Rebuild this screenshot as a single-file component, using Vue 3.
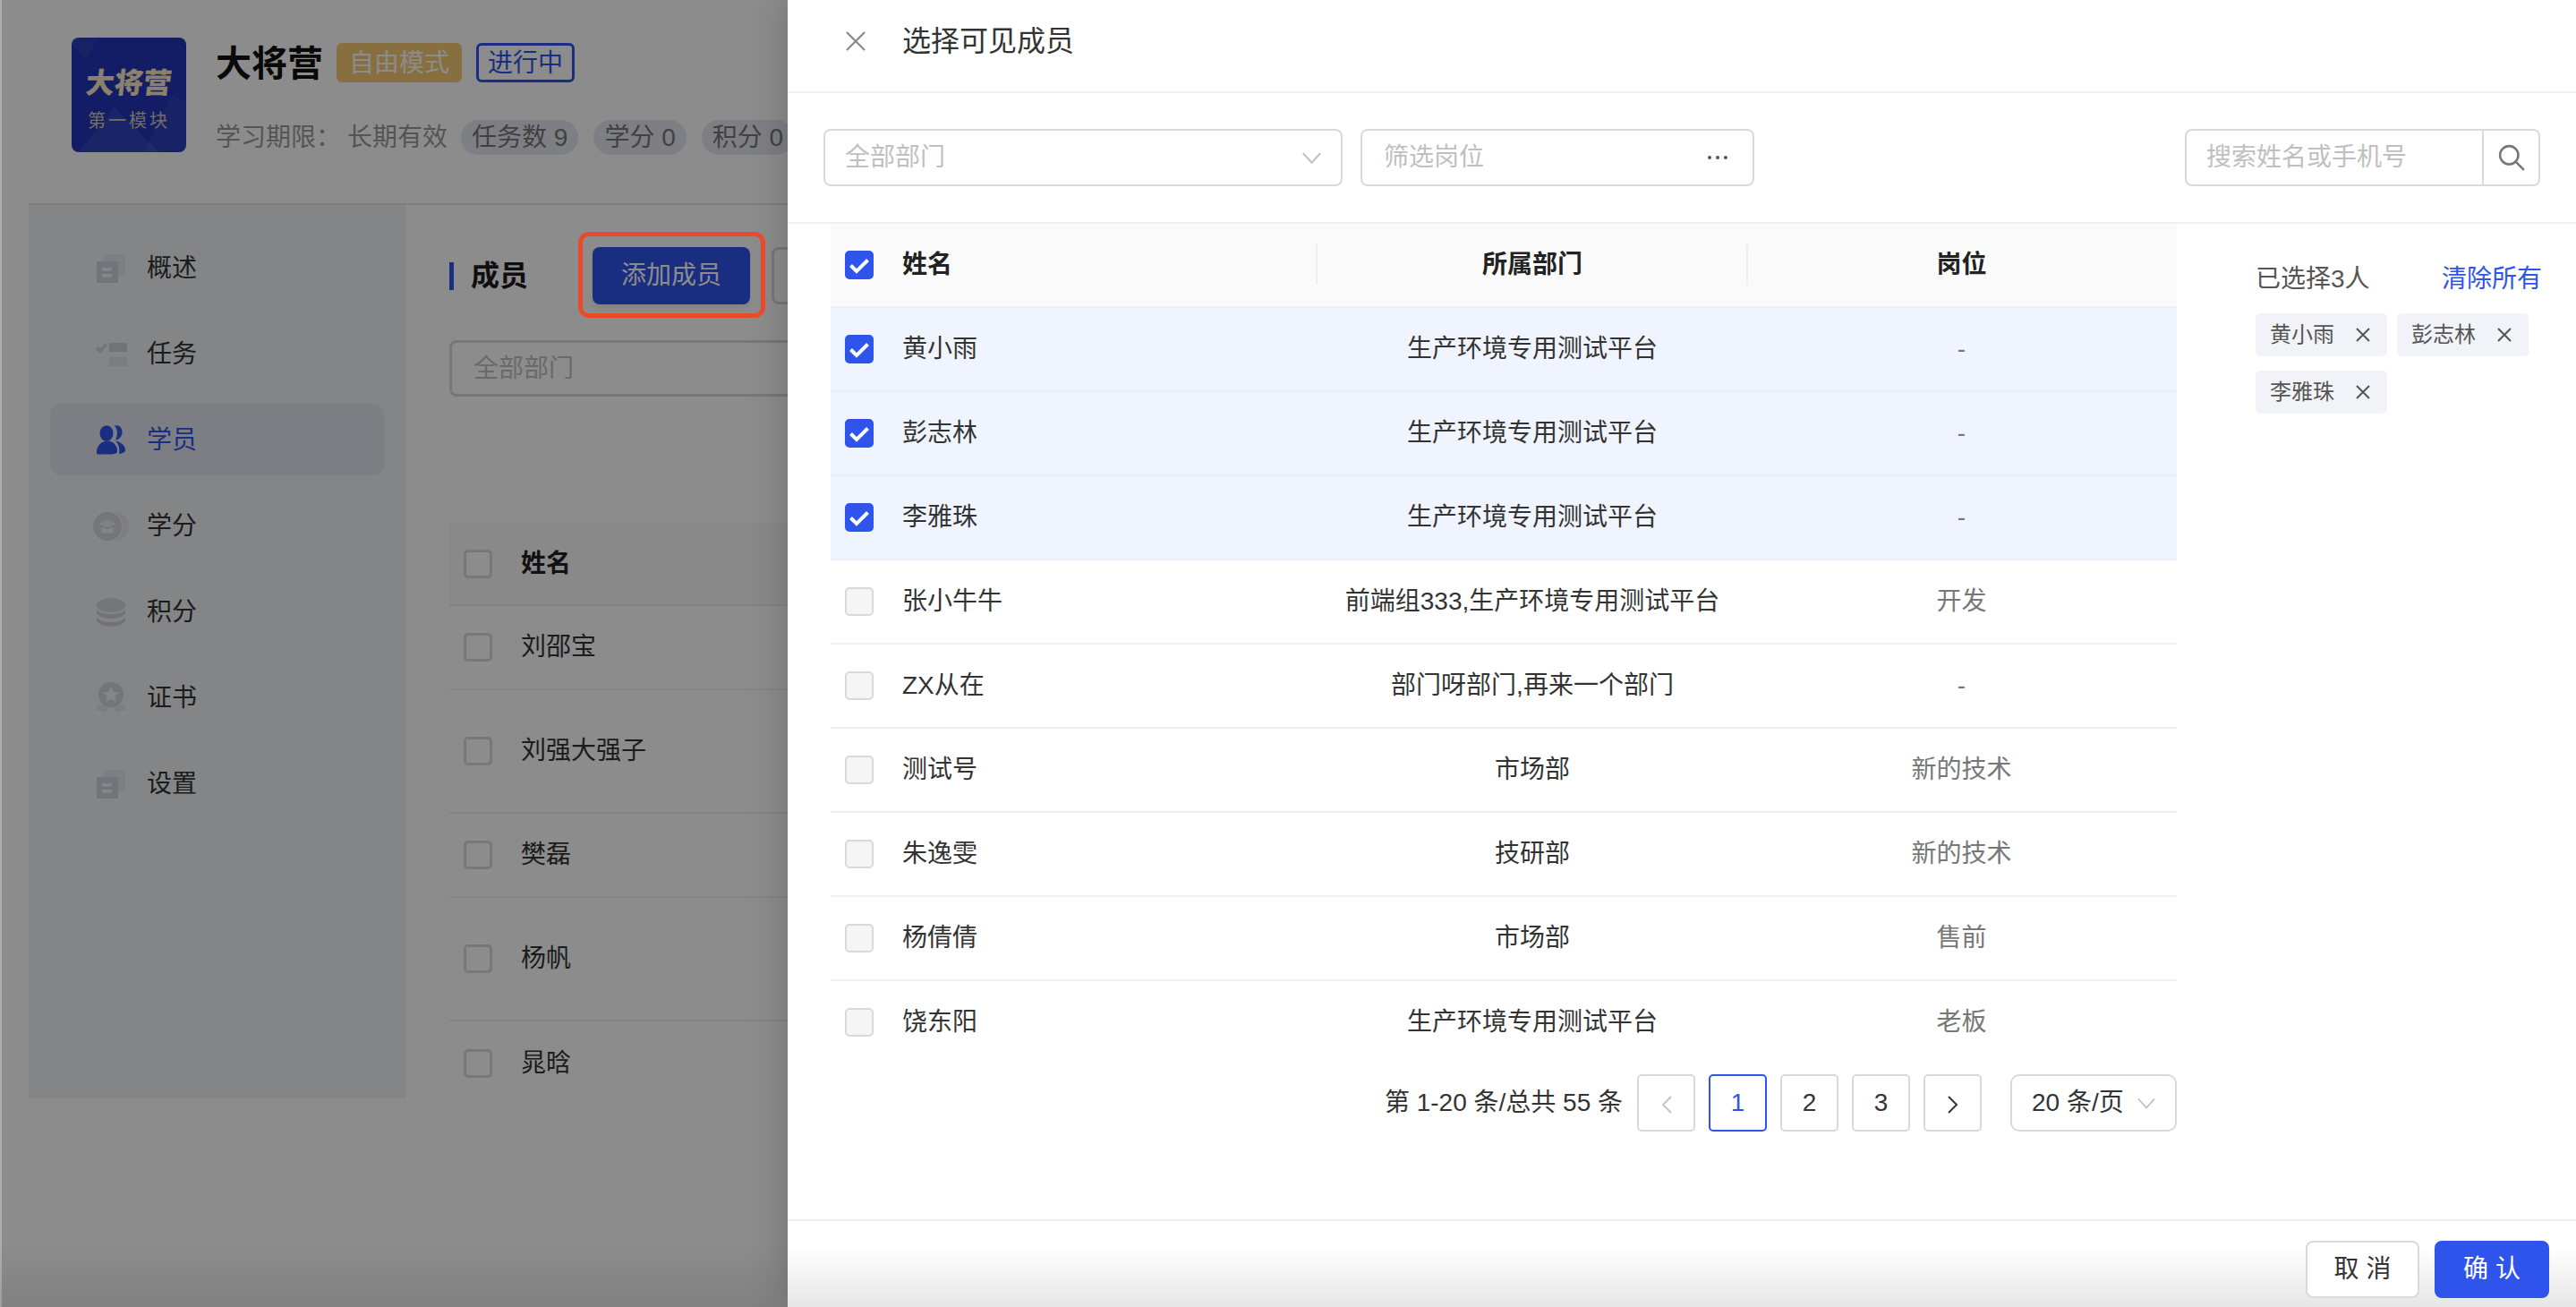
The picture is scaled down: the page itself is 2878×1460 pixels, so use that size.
<script setup>
const navItems = [
  { key: 'doc', label: '概述' },
  { key: 'task', label: '任务' },
  { key: 'user', label: '学员', active: true },
  { key: 'credit', label: '学分' },
  { key: 'coin', label: '积分' },
  { key: 'cert', label: '证书' },
  { key: 'doc', label: '设置' },
]

const learners = [
  { name: '刘邵宝' },
  { name: '刘强大强子', tall: true },
  { name: '樊磊' },
  { name: '杨帆', tall: true },
  { name: '晁晗' },
]

const members = [
  { name: '黄小雨', dept: '生产环境专用测试平台', job: '-', checked: true },
  { name: '彭志林', dept: '生产环境专用测试平台', job: '-', checked: true },
  { name: '李雅珠', dept: '生产环境专用测试平台', job: '-', checked: true },
  { name: '张小牛牛', dept: '前端组333,生产环境专用测试平台', job: '开发' },
  { name: 'ZX从在', dept: '部门呀部门,再来一个部门', job: '-' },
  { name: '测试号', dept: '市场部', job: '新的技术' },
  { name: '朱逸雯', dept: '技研部', job: '新的技术' },
  { name: '杨倩倩', dept: '市场部', job: '售前' },
  { name: '饶东阳', dept: '生产环境专用测试平台', job: '老板' },
]

const selected = members.filter((m) => m.checked)
</script>

<template>
  <div class="page">
    <div class="bg">
      <header class="course">
        <div class="logo">
          <svg class="logo-art" viewBox="0 0 128 128">
            <path d="M0 8 L16 24 L30 0 L0 0 Z" fill="#fff" opacity=".05" />
            <path d="M8 128 L48 78 L98 128 Z" fill="#fff" opacity=".07" />
            <path d="M80 128 L112 64 L128 72 L128 128 Z" fill="#fff" opacity=".05" />
          </svg>
          <span class="logo-main">大将营</span>
          <span class="logo-sub">第一模块</span>
        </div>
        <div class="meta">
          <div class="meta-top">
            <h1>大将营</h1>
            <span class="tag tag-gold">自由模式</span>
            <span class="tag tag-line">进行中</span>
          </div>
          <div class="meta-bottom">
            <span class="period-label">学习期限：</span>
            <span class="period-value">长期有效</span>
            <span class="chip">任务数 9</span>
            <span class="chip">学分 0</span>
            <span class="chip">积分 0</span>
          </div>
        </div>
      </header>

      <div class="body">
        <aside class="side">
          <div v-for="item in navItems" :key="item.label" class="nav" :class="{ active: item.active }">
            <svg class="nav-icon" viewBox="0 0 40 40">
              <template v-if="item.key === 'doc'">
                <rect x="12" y="5" width="24" height="24" fill="#e6e8f3" />
                <rect x="4" y="13" width="24" height="24" fill="#d3d5e0" />
                <rect x="10" y="20" width="11" height="3.5" fill="#f5f6fa" />
                <rect x="10" y="27" width="11" height="3.5" fill="#f5f6fa" />
              </template>
              <template v-else-if="item.key === 'task'">
                <path d="M4 13.5 L8 17 L15 9.5" fill="none" stroke="#d3d4da" stroke-width="4" />
                <rect x="18" y="8" width="20" height="10" fill="#d0d1d6" />
                <rect x="18" y="24" width="20" height="10" fill="#e2e3e9" />
              </template>
              <template v-else-if="item.key === 'user'">
                <path d="M24 4.5 C30 3 33 8 32.5 12.5 C32 17 29 20 25 20.5 C27.5 16 28 9 24 4.5 Z" fill="#2f54eb" />
                <ellipse cx="15" cy="13" rx="7.5" ry="8.8" fill="#2f54eb" />
                <path d="M4 36 C3 28 9 21.5 16 21.5 C23 21.5 28 28 27 34 C26 36 22 36.5 16 36.5 C10 36.5 5 37 4 36 Z" fill="#2f54eb" />
                <path d="M25 21.5 C31 22.5 36 27 36 31.5 C36 34 33 35.5 29 36 C30 31 29 25.5 25 21.5 Z" fill="#2f54eb" />
              </template>
              <template v-else-if="item.key === 'credit'">
                <circle cx="24" cy="21" r="16" fill="#e7e8ed" />
                <circle cx="16" cy="21" r="17" fill="#f1f2f5" />
                <circle cx="16" cy="21" r="16" fill="#d6d7dc" />
                <path d="M16 13.5 L26 18 L16 22.5 L6 18 Z" fill="#eceef2" />
                <path d="M9 21.5 L16 24.5 L23 21.5 L23 27 C20 29.5 12 29.5 9 27 Z" fill="#eceef2" />
              </template>
              <template v-else-if="item.key === 'coin'">
                <ellipse cx="20" cy="13" rx="16" ry="8" fill="#d6d7dc" />
                <path d="M4 17 C7 25 33 25 36 17 L36 22 C33 30 7 30 4 22 Z" fill="#d0d1d6" />
                <path d="M4 26 C7 34 33 34 36 26 L36 30 C33 39 7 39 4 30 Z" fill="#cfd0d5" />
              </template>
              <template v-else>
                <path d="M6 27 L3 35 L10 34 L13 38 L18 31 Z" fill="#e4e5ea" />
                <path d="M34 27 L37 35 L30 34 L27 38 L22 31 Z" fill="#e4e5ea" />
                <circle cx="20" cy="17" r="14" fill="#d4d6de" />
                <path d="M20 8 L22.8 13.8 L29 14.5 L24.5 18.8 L25.7 25 L20 22 L14.3 25 L15.5 18.8 L11 14.5 L17.2 13.8 Z" fill="#f2f3f7" />
              </template>
            </svg>
            <span class="nav-label">{{ item.label }}</span>
          </div>
        </aside>

        <main class="main">
          <div class="main-head">
            <span class="main-bar"></span>
            <span class="main-title">成员</span>
            <div class="add-wrap">
              <button class="add-btn">添加成员</button>
              <span class="highlight"></span>
            </div>
            <span class="ghost-btn"></span>
          </div>
          <div class="dept-filter">全部部门</div>
          <div class="learners">
            <div class="learner-row learner-head">
              <span class="box"></span>
              <span>姓名</span>
            </div>
            <div v-for="row in learners" :key="row.name" class="learner-row" :class="{ tall: row.tall }">
              <span class="box"></span>
              <span>{{ row.name }}</span>
            </div>
          </div>
        </main>
      </div>
      <div class="bottom-fade"></div>
    </div>

    <div class="mask"></div>

    <section class="drawer">
      <div class="drawer-head">
        <svg class="close" viewBox="0 0 24 24">
          <path d="M2 2 L22 22 M22 2 L2 22" fill="none" stroke="#8c8c8c" stroke-width="2.4" />
        </svg>
        <span>选择可见成员</span>
      </div>

      <div class="filters">
        <div class="field field-dept">
          <span class="holder">全部部门</span>
          <svg class="arrow" viewBox="0 0 22 13">
            <path d="M1 1 L11 12 L21 1" fill="none" stroke="#bfbfbf" stroke-width="2" />
          </svg>
        </div>
        <div class="field field-job">
          <span class="holder">筛选岗位</span>
          <span class="dots"><i></i><i></i><i></i></span>
        </div>
        <div class="search">
          <span class="holder">搜索姓名或手机号</span>
          <span class="search-btn">
            <svg viewBox="0 0 28 28" width="30" height="30">
              <circle cx="11.5" cy="11.5" r="9.5" fill="none" stroke="#777" stroke-width="2.4" />
              <path d="M18.5 18.5 L27 27" stroke="#777" stroke-width="2.4" />
            </svg>
          </span>
        </div>
      </div>

      <div class="content">
        <div class="list">
          <div class="table">
            <div class="tr th">
              <div class="td td-name">
                <span class="check on">
                  <svg viewBox="0 0 32 32"><path d="M6.5 16.5 L13 23 L25.5 10.5" fill="none" stroke="#fff" stroke-width="4" /></svg>
                </span>
                <span>姓名</span>
              </div>
              <div class="td td-center td-dept col-split">所属部门</div>
              <div class="td td-center col-split">岗位</div>
            </div>
            <div v-for="m in members" :key="m.name" class="tr" :class="{ picked: m.checked }">
              <div class="td td-name">
                <span class="check" :class="{ on: m.checked }">
                  <svg v-if="m.checked" viewBox="0 0 32 32"><path d="M6.5 16.5 L13 23 L25.5 10.5" fill="none" stroke="#fff" stroke-width="4" /></svg>
                </span>
                <span>{{ m.name }}</span>
              </div>
              <div class="td td-center td-dept">{{ m.dept }}</div>
              <div class="td td-center td-job">{{ m.job }}</div>
            </div>
          </div>

          <div class="pager">
            <span class="total">第 1-20 条/总共 55 条</span>
            <div class="pg-group">
              <span class="pg">
                <svg class="chev" viewBox="0 0 14 20" width="14" height="20"><path d="M12 1 L3 10 L12 19" fill="none" stroke="#c4c4c4" stroke-width="2" /></svg>
              </span>
              <span class="pg current">1</span>
              <span class="pg">2</span>
              <span class="pg">3</span>
              <span class="pg">
                <svg class="chev" viewBox="0 0 14 20" width="14" height="20"><path d="M2 1 L11 10 L2 19" fill="none" stroke="#333" stroke-width="2" /></svg>
              </span>
            </div>
            <div class="page-size">
              <span>20 条/页</span>
              <svg viewBox="0 0 22 13" width="20" height="13"><path d="M1 1 L11 12 L21 1" fill="none" stroke="#bfbfbf" stroke-width="2" /></svg>
            </div>
          </div>
        </div>

        <aside class="picked-panel">
          <div class="picked-head">
            <span>已选择3人</span>
            <a class="clear">清除所有</a>
          </div>
          <div class="picked-tags">
            <span v-for="m in selected" :key="m.name" class="picked-tag">
              {{ m.name }}
              <svg viewBox="0 0 16 16" width="16" height="16"><path d="M1 1 L15 15 M15 1 L1 15" fill="none" stroke="#555" stroke-width="2" /></svg>
            </span>
          </div>
        </aside>
      </div>

      <footer class="drawer-foot">
        <button class="btn">取 消</button>
        <button class="btn btn-primary">确 认</button>
      </footer>
    </section>
  </div>
</template>

<style>
html, body {
  margin: 0;
  overflow: hidden;
  background: #fff;
}
</style>

<style scoped>
* {
  box-sizing: border-box;
}
.page {
  position: relative;
  width: 2878px;
  height: 1460px;
  overflow: hidden;
  font-family: "Liberation Sans", "Noto Sans CJK SC", sans-serif;
  font-size: 28px;
  line-height: 1.4;
  color: #333;
  background: #fff;
}
.bg {
  height: 100%;
  padding: 42px 0 0 32px;
}

/* course header */
.course {
  display: flex;
  height: 185px;
  padding-left: 48px;
  gap: 33px;
}
.logo {
  position: relative;
  width: 128px;
  height: 128px;
  border-radius: 8px;
  background: #2136b8;
  overflow: hidden;
  display: flex;
  flex-direction: column;
  align-items: center;
  color: #fbe9c6;
}
.logo-art {
  position: absolute;
  inset: 0;
}
.logo-main {
  margin-top: 29px;
  font-size: 32px;
  line-height: 44px;
  font-weight: 900;
  transform: skewX(-6deg);
}
.logo-sub {
  margin-top: 8px;
  font-size: 20px;
  line-height: 24px;
  letter-spacing: 3px;
  opacity: .8;
}
.meta-top {
  display: flex;
  align-items: center;
  height: 44px;
  margin-top: 6px;
}
.meta-top h1 {
  margin: 2px 15px 0 0;
  font-size: 40px;
  font-weight: 600;
  color: #111;
}
.tag {
  height: 44px;
  padding: 2px 14px 0;
  border-radius: 6px;
  display: flex;
  align-items: center;
}
.tag-gold {
  background: #f8cb74;
  color: #fff;
}
.tag-line {
  margin-left: 16px;
  border: 3px solid #2f54eb;
  color: #2f54eb;
  padding: 2px 10px 0;
  background: #fff;
}
.meta-bottom {
  display: flex;
  align-items: center;
  height: 39px;
  margin-top: 42px;
  color: #9a9a9a;
}
.period-value {
  margin-left: 7px;
  margin-right: 15px;
}
.chip {
  height: 39px;
  line-height: 39px;
  padding: 0 12px;
  margin-right: 17px;
  border-radius: 20px;
  background: #e5e7f0;
  color: #777;
  white-space: nowrap;
}

/* left menu and main content */
.body {
  display: flex;
  border-top: 2px solid #e4e4e4;
}
.side {
  flex: none;
  width: 422px;
  height: 998px;
  padding: 30px 25px 0 24px;
  background: #f1f2f5;
  display: flex;
  flex-direction: column;
  gap: 16px;
}
.nav {
  height: 80px;
  padding-left: 48px;
  border-radius: 12px;
  display: flex;
  align-items: center;
  gap: 20px;
}
.nav-label {
  margin-top: 2px;
}
.nav.active {
  background: #e3e6f1;
  color: #2f54eb;
}
.nav-icon {
  width: 40px;
  height: 40px;
  flex: none;
}
.main {
  flex: 1;
  padding-left: 48px;
}
.main-head {
  display: flex;
  align-items: center;
  height: 64px;
  margin-top: 47px;
}
.main-bar {
  width: 5px;
  height: 31px;
  background: #2f54eb;
}
.main-title {
  margin-left: 19px;
  font-size: 32px;
  font-weight: 700;
  color: #1c1c1c;
}
.add-wrap {
  position: relative;
  margin-left: 72px;
}
.add-btn {
  display: block;
  width: 176px;
  height: 64px;
  border: 0;
  border-radius: 8px;
  background: #2f54eb;
  color: #fff;
  font: inherit;
  box-shadow: 0 4px 6px rgba(0, 0, 0, .08);
}
/* annotation drawn on the screenshot, stays bright above the dim layer */
.highlight {
  position: absolute;
  z-index: 5;
  inset: -17px -17px -15px -16px;
  border: 5px solid #ea4a2b;
  border-radius: 12px;
}
.ghost-btn {
  width: 200px;
  height: 64px;
  margin-left: 24px;
  border: 3px solid #d9d9d9;
  border-radius: 8px;
  background: #fff;
}
.dept-filter {
  width: 500px;
  height: 63px;
  margin-top: 40px;
  padding-left: 24px;
  border: 3px solid #d9d9d9;
  border-radius: 8px;
  display: flex;
  align-items: center;
  color: #bfbfbf;
}
.learners {
  margin-top: 141px;
  width: 500px;
}
.learner-row {
  height: 94px;
  padding-left: 16px;
  border-bottom: 2px solid #efefef;
  display: flex;
  align-items: center;
  gap: 32px;
}
.learner-row.tall {
  height: 138px;
}
.learner-row:last-child {
  border-bottom: 0;
}
.learner-head {
  height: 93px;
  background: #fafafa;
  font-weight: 700;
  color: #222;
}
.box {
  flex: none;
  width: 32px;
  height: 32px;
  border: 3px solid #d9d9d9;
  border-radius: 5px;
  background: #fff;
}
.bottom-fade {
  position: absolute;
  left: 0;
  right: 0;
  bottom: 0;
  height: 70px;
  background: linear-gradient(rgba(0, 0, 0, 0), rgba(0, 0, 0, .08));
}
.mask {
  position: absolute;
  inset: 0;
  background: rgba(0, 0, 0, .45);
  background-clip: padding-box;
  border-left: 2px solid rgba(0, 0, 0, .32);
}

/* drawer */
.drawer {
  position: absolute;
  top: 0;
  right: 0;
  bottom: 0;
  width: 1998px;
  background: #fff;
  display: flex;
  flex-direction: column;
  box-shadow: -6px 0 36px rgba(0, 0, 0, .16);
}
.drawer-head {
  flex: none;
  height: 104px;
  padding: 0 0 10px 64px;
  border-bottom: 2px solid #f0f0f0;
  display: flex;
  align-items: center;
  gap: 40px;
  font-size: 32px;
  color: #333;
}
.close {
  width: 24px;
  height: 24px;
}
.filters {
  flex: none;
  height: 146px;
  padding: 40px;
  border-bottom: 2px solid #f0f0f0;
  display: flex;
  gap: 20px;
}
.field {
  height: 64px;
  border: 2px solid #d9d9d9;
  border-radius: 8px;
  padding: 0 22px;
  display: flex;
  align-items: center;
  justify-content: space-between;
}
.field-dept {
  width: 580px;
}
.field-job {
  width: 440px;
  padding-left: 24px;
  padding-right: 28px;
}
.holder {
  color: #bfbfbf;
}
.arrow {
  width: 21px;
  height: 13px;
}
.dots {
  display: flex;
  gap: 5px;
}
.dots i {
  width: 4px;
  height: 4px;
  border-radius: 50%;
  background: #555;
}
.search {
  width: 397px;
  height: 64px;
  margin-left: auto;
  border: 2px solid #d9d9d9;
  border-radius: 8px;
  padding-left: 22px;
  display: flex;
  align-items: center;
  justify-content: space-between;
}
.search-btn {
  width: 63px;
  height: 100%;
  border-left: 2px solid #d9d9d9;
  display: flex;
  align-items: center;
  justify-content: center;
}
.content {
  flex: 1;
  min-height: 0;
  display: flex;
  padding-left: 48px;
}
.list {
  flex: none;
  width: 1504px;
}
.table {
  height: 936px;
  overflow: hidden;
}
.tr {
  height: 94px;
  border-bottom: 2px solid #f0f0f0;
  display: grid;
  grid-template-columns: 542px 481px 481px;
}
.tr.th {
  background: #fafafa;
  font-weight: 700;
  color: #222;
}
.tr.picked {
  background: #f0f4fe;
  border-bottom-color: #eaeef6;
}
.td {
  display: flex;
  align-items: center;
}
.td-name {
  padding-left: 16px;
  gap: 32px;
}
.td-center {
  justify-content: center;
}
.td-dept {
  padding-left: 3px;
}
.td-job {
  color: #777;
}
.col-split {
  position: relative;
}
.col-split::before {
  content: "";
  position: absolute;
  left: 0;
  top: 23px;
  height: 45px;
  width: 2px;
  background: #eee;
}
.check {
  flex: none;
  width: 32px;
  height: 32px;
  border: 2px solid #d9d9d9;
  border-radius: 5px;
  background: #f5f5f5;
}
.check svg {
  display: block;
  margin: -2px;
  width: 32px;
  height: 32px;
}
.check.on {
  background: #2f54eb;
  border-color: #2f54eb;
}
.pager {
  margin-top: 14px;
  display: flex;
  align-items: center;
  justify-content: flex-end;
}
.total {
  white-space: nowrap;
  margin-right: 16px;
}
.pg-group {
  display: flex;
  gap: 15px;
  margin-right: 32px;
}
.pg {
  width: 65px;
  height: 64px;
  border: 2px solid #d9d9d9;
  border-radius: 5px;
  display: flex;
  align-items: center;
  justify-content: center;
}
.pg.current {
  border-color: #2f54eb;
  color: #2f54eb;
}
.chev {
  margin-top: 4px;
}
.page-size {
  width: 186px;
  height: 64px;
  padding: 0 22px;
  border: 2px solid #d9d9d9;
  border-radius: 10px;
  display: flex;
  align-items: center;
  justify-content: space-between;
  white-space: nowrap;
}
.picked-panel {
  flex: 1;
  padding: 40px 38px 0 88px;
}
.picked-head {
  height: 44px;
  display: flex;
  align-items: center;
  justify-content: space-between;
  color: #555;
}
.clear {
  color: #2f54eb;
}
.picked-tags {
  margin-top: 16px;
  display: flex;
  flex-wrap: wrap;
  gap: 16px 11px;
}
.picked-tag {
  width: 147px;
  height: 48px;
  padding: 0 19px 0 16px;
  border-radius: 5px;
  background: #f2f3f8;
  font-size: 24px;
  color: #555;
  display: flex;
  align-items: center;
  justify-content: space-between;
}
.drawer-foot {
  flex: none;
  height: 98px;
  padding: 22px 30px 0 0;
  border-top: 2px solid #f0f0f0;
  background: linear-gradient(#fff 30%, #e6e6e6 100%);
  display: flex;
  justify-content: flex-end;
  gap: 17px;
}
.btn {
  width: 127px;
  height: 64px;
  border: 2px solid #d9d9d9;
  border-radius: 8px;
  background: #fff;
  font: inherit;
  color: #333;
}
.btn-primary {
  width: 128px;
  border-color: #2f54eb;
  background: #2f54eb;
  color: #fff;
}
</style>
